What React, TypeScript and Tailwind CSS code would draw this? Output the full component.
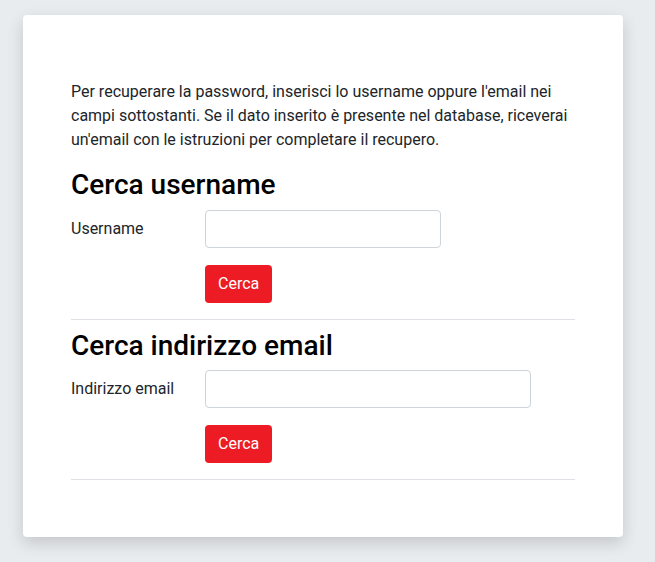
import React from "react";

function Row({ label, inputW }: { label: string; inputW: string }) {
  return (
    <div>
      <div className="flex items-center">
        <label className="w-[134px] shrink-0 text-[16px] leading-6 text-[#212529]">{label}</label>
        <input
          type="text"
          className={`${inputW} h-[38px] rounded-[4px] border border-[#ced4da] bg-white px-3 outline-none`}
        />
      </div>
      <div className="mt-[17px] pl-[134px]">
        <button className="h-[38px] rounded-[4px] bg-[#ed1c24] px-[13px] text-[16px] leading-6 text-white">
          Cerca
        </button>
      </div>
    </div>
  );
}

export default function App() {
  return (
    <div
      className="min-h-[562px] w-full bg-[#e9ecef] pt-[15px] pl-[23px]"
      style={{ fontFamily: "Roboto, 'Liberation Sans', sans-serif" }}
    >
      <div className="w-[600px] rounded-[4px] bg-white px-12 pt-[65px] pb-[57px] shadow-[0_6px_16px_rgba(0,0,0,0.16)]">
        <p className="text-[16px] leading-6 text-[#212529]">
          Per recuperare la password, inserisci lo username oppure l'email nei campi sottostanti. Se il dato
          inserito è presente nel database, riceverai un'email con le istruzioni per completare il recupero.
        </p>
        <h2 className="mt-4 mb-2 text-[28px] font-medium leading-[1.2] text-[#000]">Cerca username</h2>
        <Row label="Username" inputW="w-[236px]" />
        <hr className="mt-4 mb-[9px] border-t border-[#dee2e6]" />
        <h2 className="mb-2 text-[28px] font-medium leading-[1.2] text-[#000]">Cerca indirizzo email</h2>
        <Row label="Indirizzo email" inputW="w-[326px]" />
        <hr className="mt-4 border-t border-[#dee2e6]" />
      </div>
    </div>
  );
}
